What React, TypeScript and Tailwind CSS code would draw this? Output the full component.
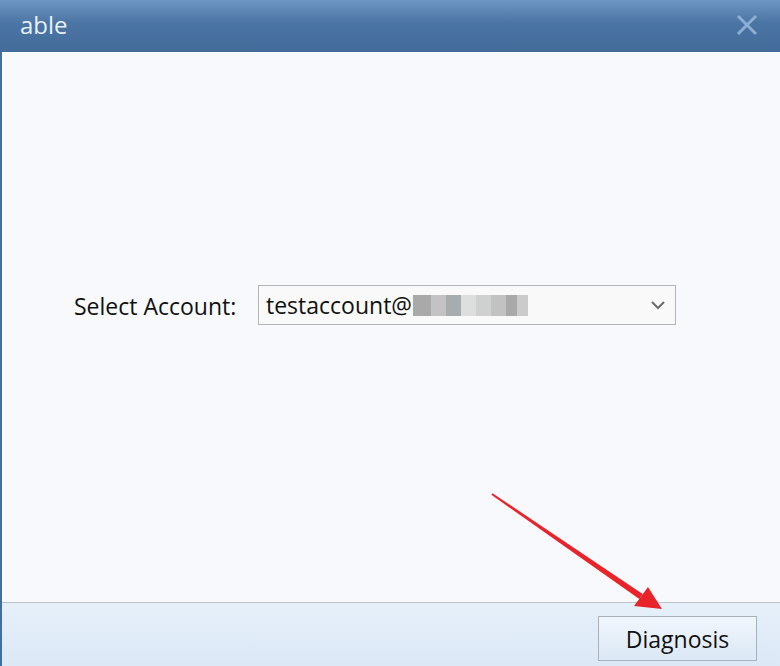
import React from "react";

const blur = [
  { w: 18, c: "#a9a9a9" },
  { w: 15, c: "#c3c3c3" },
  { w: 15, c: "#a7acaf" },
  { w: 15, c: "#dedede" },
  { w: 15, c: "#cfd0d0" },
  { w: 15, c: "#c2c2c2" },
  { w: 11, c: "#a9a9a9" },
  { w: 11, c: "#cbcbcb" },
];

function Arrow() {
  return (
    <svg className="pointer-events-none absolute left-0 top-0" width="780" height="666">
      <polygon points="491.4,494.8 492.6,493.2 642.7,594 639.3,599" fill="#e8232a" />
      <polygon points="662,609 634,606 648,587" fill="#e8232a" />
    </svg>
  );
}

export default function App() {
  return (
    <div
      className="relative flex h-[666px] w-[780px] flex-col overflow-hidden"
      style={{ fontFamily: '"Open Sans", "Noto Sans", sans-serif' }}
    >
      {/* title bar */}
      <div className="flex h-[52px] shrink-0 items-center justify-between bg-gradient-to-b from-[#6d96c3] via-[#4a74a3] via-45% to-[#436c9b] pl-[20px] pr-[22px]">
        <span className="pb-[2px] text-[24px] text-[#e8f0fa]">able</span>
        <svg width="22" height="22" viewBox="0 0 22 22" className="mb-[2px]">
          <path d="M2 2 L20 20 M20 2 L2 20" stroke="#8eaed2" strokeWidth="3" />
        </svg>
      </div>

      {/* body */}
      <div className="flex flex-1 flex-col border-l-2 border-[#466e9c] bg-[#f8f9fd]">
        <div className="flex-1 pt-[233px]">
          <div className="flex items-center">
            <span className="ml-[72px] w-[184px] pt-[2px] text-[23px] text-[#111]">Select Account:</span>
            <div className="flex h-[40px] w-[418px] items-center justify-between border border-[#b4b4b4] bg-[#f9f9f9] pl-[7px] pr-[10px]">
              <div className="flex items-center">
                <span className="text-[23px] text-[#111]">testaccount@</span>
                <div className="ml-[1px] flex h-[21px]">
                  {blur.map((b, i) => (
                    <div key={i} className="h-full" style={{ width: b.w, background: b.c }} />
                  ))}
                </div>
              </div>
              <svg width="14" height="9" viewBox="0 0 14 9">
                <path d="M1 1 L7 7 L13 1" stroke="#6b6b6b" strokeWidth="2" fill="none" />
              </svg>
            </div>
          </div>
        </div>

        {/* footer */}
        <div className="flex h-[64px] shrink-0 justify-end border-t border-[#b9c2cb] bg-gradient-to-b from-[#e5f0fa] to-[#dce8f6] pr-[23px] pt-[13px]">
          <button className="h-[45px] w-[159px] border border-[#a9b1b8] bg-gradient-to-b from-[#f1f6fc] to-[#dce8f6] pt-[2px] text-[23px] text-[#111]">
            Diagnosis
          </button>
        </div>
      </div>

      <Arrow />
    </div>
  );
}
